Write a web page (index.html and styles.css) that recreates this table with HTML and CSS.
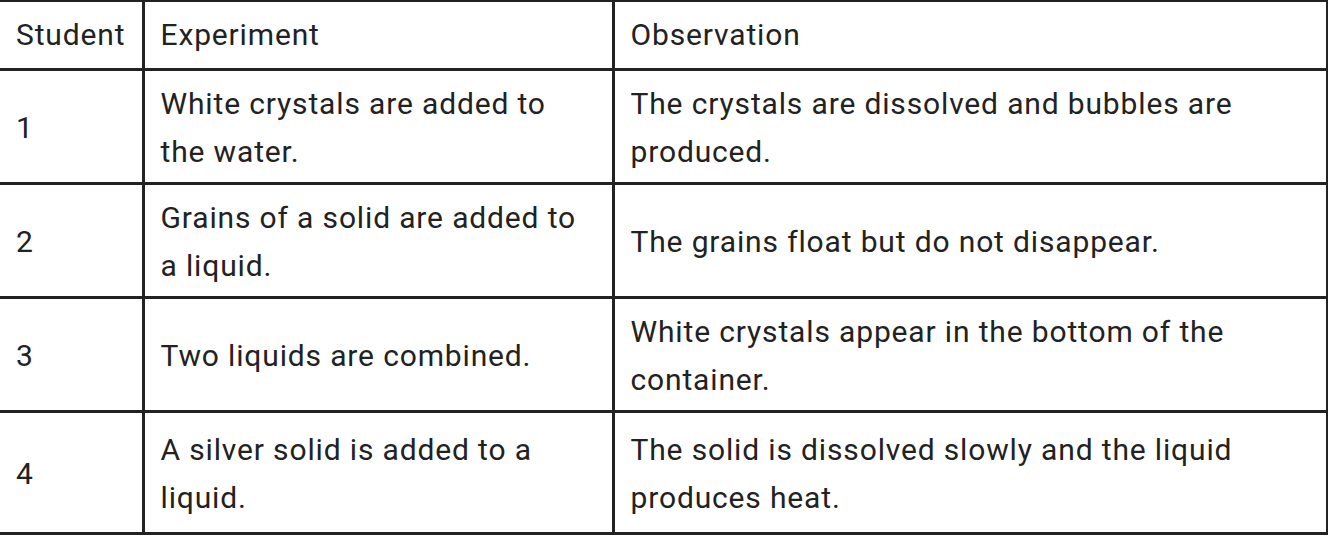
FILE: index.html
```html
<!DOCTYPE html>
<html>
<head>
<meta charset="utf-8">
<link rel="stylesheet" href="styles.css">
</head>
<body>
<table class="data">
  <colgroup>
    <col class="c1"><col class="c2"><col class="c3">
  </colgroup>
  <tr class="head"><td>Student</td><td>Experiment</td><td>Observation</td></tr>
  <tr><td>1</td><td>White crystals are added to the water.</td><td>The crystals are dissolved and bubbles are produced.</td></tr>
  <tr><td>2</td><td>Grains of a solid are added to a liquid.</td><td>The grains float but do not disappear.</td></tr>
  <tr><td>3</td><td>Two liquids are combined.</td><td>White crystals appear in the bottom of the container.</td></tr>
  <tr class="last"><td>4</td><td>A silver solid is added to a liquid.</td><td>The solid is dissolved slowly and the liquid produces heat.</td></tr>
</table>
</body>
</html>
```

FILE: styles.css
```css
html, body {
  margin: 0;
  padding: 0;
  background: #fff;
}
.data {
  border-collapse: collapse;
  width: 1327px;
  table-layout: fixed;
  font-family: Roboto, "Liberation Sans", sans-serif;
  font-size: 30px;
  letter-spacing: 0.85px;
  line-height: 48px;
  color: #222;
}
.c1 { width: 143px; }
.c2 { width: 470px; }
.c3 { width: 714px; }
.data td {
  border: 3px solid #222;
  padding: 9px 20px 6px 16px;
  vertical-align: middle;
}
.data tr.head td {
  padding-top: 9px;
  padding-bottom: 9px;
}
.data tr.last td {
  padding-top: 13px;
  padding-bottom: 10px;
}
.data tr:first-child td { border-top-width: 2px; }
.data td:first-child { border-left: 0; }
.data td:last-child { border-right-width: 2px; }
```
